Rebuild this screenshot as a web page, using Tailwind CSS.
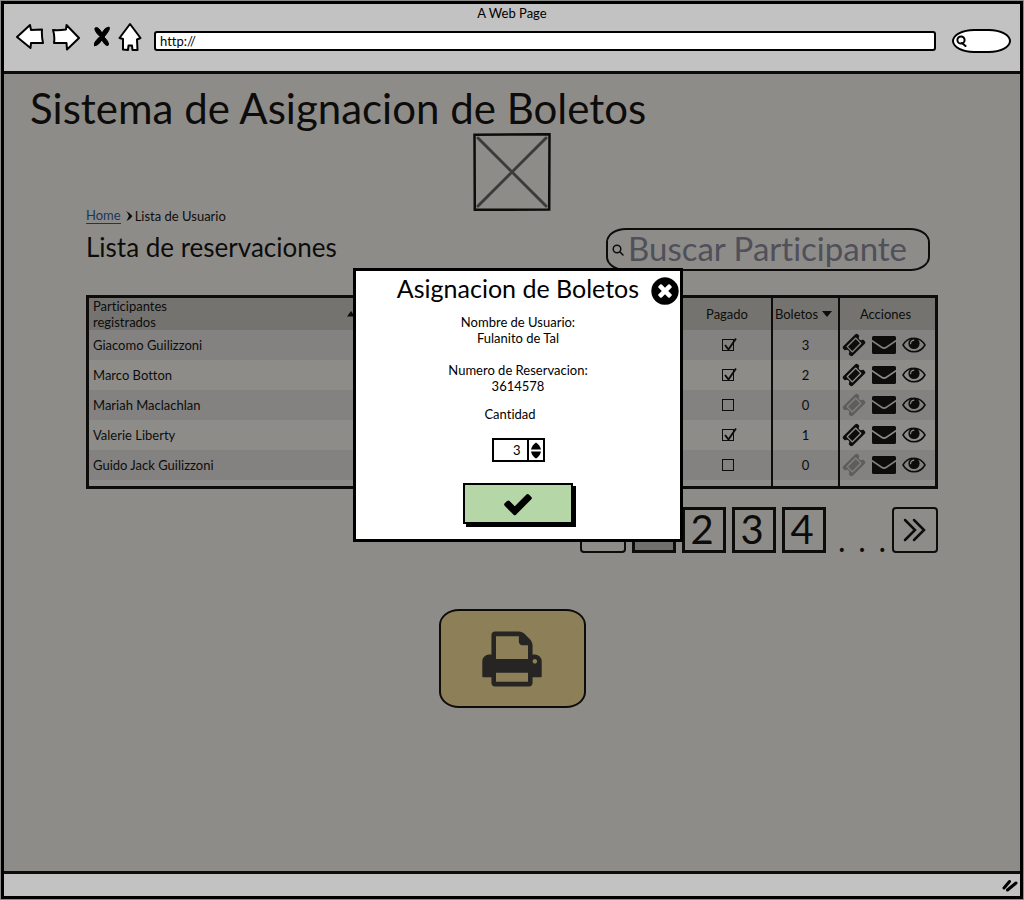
<!DOCTYPE html>
<html lang="es">
<head>
<meta charset="utf-8">
<meta name="viewport" content="width=device-width, initial-scale=1">
<title>A Web Page</title>
<script src="https://cdn.jsdelivr.net/npm/@tailwindcss/browser@4"></script>
</head>
<body class="bg-[#8d8c89] font-['Lato','Open_Sans',sans-serif] text-[13px] leading-4 text-[#0d0c0b] [font-variant-ligatures:none]">
<svg class="hidden" aria-hidden="true">
  <symbol id="ticket" viewBox="0 0 1792 1792"><path d="M1024 452l316 316-572 572-316-316zm-211 979l618-618q19-19 19-45t-19-45l-362-362q-18-18-45-18t-45 18l-618 618q-19 19-19 45t19 45l362 362q18 18 45 18t45-18zm889-637l-907 908q-37 37-90.5 37t-90.5-37l-126-126q56-56 56-136t-56-136-136-56-136 56l-125-126q-37-37-37-90.5t37-90.5l907-906q37-37 90.5-37t90.5 37l125 125q-56 56-56 136t56 136 136 56 136-56l126 125q37 37 37 90.5t-37 90.5z"/></symbol>
  <symbol id="mail" viewBox="0 0 24 18"><path d="M1.5 0H22.500Q24 0 24 1.500V3.800L14 10.600Q12 11.700 10 10.600L0 3.800V1.500Q0 0 1.500 0ZM0 5.800L9.600 12.300Q12 13.600 14.400 12.300L24 5.800V16.500Q24 18 22.500 18H1.500Q0 18 0 16.500Z"/></symbol>
  <symbol id="eye" viewBox="0 0 24 16"><path d="M1 8Q5 1.200 12 1.200T23 8Q19 14.800 12 14.800T1 8Z" fill="none" stroke="currentColor" stroke-width="1.500"/><circle cx="12" cy="6.500" r="5.600"/><path d="M8.600 6.600Q8.800 3.500 11.800 3.200" fill="none" stroke="#8d8c89" stroke-width="1.200" stroke-linecap="round"/></symbol>
  <symbol id="tick" viewBox="0 0 16 16"><path d="M3 8L6.500 12.500L14 1.500" fill="none" stroke="currentColor" stroke-width="1.900"/></symbol>
</svg>

<div class="flex min-h-screen flex-col p-px">
<div class="flex flex-1 flex-col border-[3px] border-black">

  <header class="border-b-[3px] border-[#0d0c0b] bg-[#c2c2c2] pt-px pb-[18px] text-black">
    <p class="text-center">A Web Page</p>
    <nav aria-label="Navegador" class="flex items-center pr-[9px] pl-3">
      <button type="button" aria-label="Atrás" class="mr-2"><svg class="h-8 w-7" viewBox="0 0 28 32" fill="#fff" stroke="#000" stroke-width="2" stroke-linejoin="round"><path d="M1 16L14 4L15 9L26 8.500Q25.500 15 27 22L15 22L14.500 27Z"/></svg></button>
      <button type="button" aria-label="Adelante" class="mr-3.5"><svg class="h-8 w-7" viewBox="0 0 28 32" fill="#fff" stroke="#000" stroke-width="2" stroke-linejoin="round"><path d="M1 9Q7 9.500 14 8.500L14.500 4L27 17L15 28.500L14.500 22L2 22Q3 15 1 9Z"/></svg></button>
      <button type="button" aria-label="Detener" class="mr-2"><svg class="h-8 w-4" viewBox="0 0 16 32" fill="#000"><path d="M1 7Q4 5 8 12Q11 6 15 6Q17 8 10 16Q16 22 14 24.500Q11 25 8 19Q4 25 0 25Q-1 22 6 15.500Q0 10 1 7Z" stroke="#000"/></svg></button>
      <button type="button" aria-label="Inicio" class="mr-3"><svg class="h-8 w-6" viewBox="0 0 24 32" fill="#fff" stroke="#000" stroke-width="2" stroke-linejoin="round"><path d="M12 3L22.500 17L19 18.500L19.500 29L14.500 29L14 24.500L10.500 24.500L10 29L5 28.500L5 18L1.500 17Z"/></svg></button>
      <input type="text" aria-label="Dirección" value="http://" class="mt-2 mr-4 h-5 min-w-0 flex-1 rounded-[3px] border-2 border-black bg-white px-1 outline-none">
      <label class="mt-2 flex h-6 w-[59px] items-center rounded-[22px/12px] border-2 border-black bg-white pl-px">
        <svg class="h-3 w-3 shrink-0" viewBox="0 0 12 12" fill="none" stroke="#000" stroke-width="2" stroke-linecap="round"><circle cx="6" cy="5" r="3.600"/><path d="M7 8L10.500 11"/></svg>
        <input type="text" aria-label="Buscar en la web" class="w-0 min-w-0 flex-1 outline-none">
      </label>
    </nav>
  </header>

  <main class="relative flex-1 pt-2.5">
    <h1 class="px-[26px] text-[42px] leading-[48px]">Sistema de Asignacion de Boletos</h1>
    <svg role="img" aria-label="Imagen" class="mx-auto mt-px h-[78px] w-[78px]" viewBox="0 0 78 78" fill="none"><path d="M5 5L73 73M73 5L5 73" stroke="#3b3b39" stroke-width="3" stroke-linecap="round"/><path d="M1.500 1.800L76.500 1.200L76.200 76.500L1.800 76.800Z" stroke="#0d0c0b" stroke-width="2.500"/></svg>

    <div class="-mt-1 px-[82px]">
      <nav aria-label="Ruta" class="flex items-center gap-1 pt-px">
        <a href="#" class="border-b border-[#1b3658] leading-[15px] text-[#1b3658]">Home</a>
        <svg class="-mr-0.5 h-3 w-2" viewBox="0 0 8 12"><path d="M1 1Q5 3 7.500 6Q5 10 1.500 11Q3 8 4 6Q3 3 1 1Z" fill="#0d0c0b"/></svg>
        <span>Lista de Usuario</span>
      </nav>

      <div class="mt-1 flex items-start justify-between pr-2">
        <h2 class="text-[26px] leading-[38px]">Lista de reservaciones</h2>
        <label class="flex h-[43px] w-[324px] items-center rounded-[20px/14px] border-2 border-[#0d0c0b] pl-1">
          <svg class="mr-1 h-3 w-3 shrink-0" viewBox="0 0 12 12" fill="none" stroke="#0d0c0b" stroke-width="1.500" stroke-linecap="round"><circle cx="5" cy="5" r="3.800"/><path d="M8 8L11 11"/></svg>
          <input type="text" aria-label="Buscar Participante" placeholder="Buscar Participante" class="h-10 min-w-0 flex-1 pb-1 text-[33px] leading-9 outline-none placeholder:text-[#50505a]">
        </label>
      </div>

      <table class="mt-6 w-full table-fixed border-separate border-spacing-0 border-[3px] border-[#0d0c0b]">
        <colgroup><col class="w-[270px]"><col><col class="w-[90px]"><col class="w-[67px]"><col class="w-[97px]"></colgroup>
        <thead class="bg-[#747370]">
          <tr class="h-[31px]">
            <th scope="col" aria-sort="ascending" class="py-0 pl-1 text-left font-normal"><span class="flex items-center justify-between pr-1"><span class="w-28">Participantes registrados</span><svg class="h-1.5 w-2" viewBox="0 0 8 6"><path d="M0 5.500L4 0L8 5.500Z" fill="#0d0c0b"/></svg></span></th>
            <td></td>
            <th scope="col" class="py-0 pr-0 pl-0.5 font-normal">Pagado</th>
            <th scope="col" class="border-l-2 border-[#0d0c0b] py-0 pr-1 pl-0 font-normal"><span class="flex items-center justify-center gap-1">Boletos<svg class="h-1.5 w-2.5" viewBox="0 0 10 6"><path d="M0 0H10L5 6Z" fill="#0d0c0b"/></svg></span></th>
            <th scope="col" class="border-l-2 border-[#0d0c0b] py-0 pr-1 pl-0 font-normal">Acciones</th>
          </tr>
        </thead>
        <tbody id="rows"></tbody>
      </table>

      <nav aria-label="Paginación" class="mt-[18px] flex items-center justify-end text-[40px] leading-10">
        <button type="button" aria-label="Anterior" class="mr-1.5 flex h-[46px] w-[46px] items-center justify-center rounded border-2 border-[#0d0c0b] pb-1"><svg class="h-6 w-6" viewBox="0 0 24 24" fill="none" stroke="#0d0c0b" stroke-width="2.500" stroke-linecap="round"><path d="M12 2L2 12L12 22M21 2L11 12L21 22"/></svg></button>
        <button type="button" aria-current="page" class="mr-1.5 flex h-[46px] w-[44px] items-center justify-center border-[3px] border-[#0d0c0b] bg-[#706f6c] pb-2">1</button>
        <button type="button" class="mr-1.5 flex h-[46px] w-[44px] items-center justify-center border-[3px] border-[#0d0c0b] pr-1 pb-0.5">2</button>
        <button type="button" class="mr-1.5 flex h-[46px] w-[44px] items-center justify-center border-[3px] border-[#0d0c0b] pr-1 pb-0.5">3</button>
        <button type="button" class="mr-3 flex h-[46px] w-[44px] items-center justify-center border-[3px] border-[#0d0c0b] pr-1 pb-0.5">4</button>
        <span class="mr-1.5 flex w-12 justify-between pt-5 text-[32px] leading-6">
          <span>.</span><span>.</span><span>.</span>
        </span>
        <button type="button" aria-label="Siguiente" class="flex h-[46px] w-[46px] items-center justify-center rounded border-2 border-[#0d0c0b]"><svg class="h-6 w-6" viewBox="0 0 24 24" fill="none" stroke="#0d0c0b" stroke-width="2.500" stroke-linecap="round"><path d="M2 2L12 12L2 22M11 2L21 12L11 22"/></svg></button>
      </nav>

      <button type="button" aria-label="Imprimir" class="mx-auto mt-14 flex h-[99px] w-[147px] items-center justify-center rounded-[20px/16px] border-2 border-[#0d0c0b] bg-[#8d7f57]">
        <svg class="h-16 w-16" viewBox="0 0 1792 1792" fill="#262523"><path d="M448 1536h896v-256h-896v256zm0-640h896v-384h-160q-40 0-68-28t-28-68v-160h-640v640zm1152 64q0-26-19-45t-45-19-45 19-19 45 19 45 45 19 45-19 19-45zm128 0v416q0 13-9.500 22.500t-22.500 9.500h-224v160q0 40-28 68t-68 28h-960q-40 0-68-28t-28-68v-160h-224q-13 0-22.500-9.500t-9.500-22.500v-416q0-79 56.500-135.500t135.500-56.500h64v-544q0-40 28-68t68-28h672q40 0 88 20t76 48l152 152q28 28 48 76t20 88v256h64q79 0 135.500 56.500t56.500 135.500z"/></svg>
      </button>
    </div>

    <div class="absolute inset-0 flex items-start justify-center pt-[194px] pl-3">
      <section role="dialog" aria-modal="true" aria-labelledby="dialog-title" class="relative w-[330px] border-[3px] border-black bg-white pt-[3px] pb-[15px] text-center text-black">
        <h3 id="dialog-title" class="text-[25px] leading-7">Asignacion de Boletos</h3>
        <button type="button" aria-label="Cerrar" class="absolute top-1 -right-px"><svg class="h-8 w-8" viewBox="0 0 1792 1792"><path d="M1277 1122q0-26-19-45l-181-181 181-181q19-19 19-45 0-27-19-46l-90-90q-19-19-46-19-26 0-45 19l-181 181-181-181q-19-19-45-19-27 0-46 19l-90 90q-19 19-19 46 0 26 19 45l181 181-181 181q-19 19-19 45 0 27 19 46l90 90q19 19 46 19 26 0 45-19l181-181 181 181q19 19 45 19 27 0 46-19l90-90q19-19 19-46zm387-226q0 209-103 385.500t-279.500 279.500-385.500 103-385.500-103-279.500-279.500-103-385.500 103-385.500 279.500-279.500 385.500-103 385.500 103 279.500 279.500 103 385.500z"/></svg></button>
        <p class="mt-3">Nombre de Usuario:<br>Fulanito de Tal</p>
        <p class="mt-4">Numero de Reservacion:<br>3614578</p>
        <label for="cantidad" class="mt-3 mr-4 block">Cantidad</label>
        <div class="mx-auto mt-4 flex h-6 w-[53px] border-2 border-black">
          <input id="cantidad" type="text" inputmode="numeric" value="3" class="w-0 min-w-0 flex-1 pr-1.5 text-right outline-none">
          <div class="flex w-4 flex-col items-center justify-center gap-px border-l-2 border-black">
            <button type="button" aria-label="Aumentar"><svg class="h-2 w-2.5" viewBox="0 0 10 8"><path d="M0 7.500Q1 3 5 .5Q9 3 10 7.500Z"/></svg></button>
            <button type="button" aria-label="Disminuir"><svg class="h-2 w-2.5" viewBox="0 0 10 8"><path d="M0 .5H10Q9 5 5 7.500Q1 5 0 .5Z"/></svg></button>
          </div>
        </div>
        <button type="submit" aria-label="Confirmar" class="mx-auto mt-[21px] flex h-[41px] w-[110px] items-center justify-center border-2 border-black bg-[#b5d7a8] shadow-[3px_3px_0_0_#000]"><svg class="h-8 w-8" viewBox="0 0 1792 1792"><path d="M1671 566q0 40-28 68l-724 724-136 136q-28 28-68 28t-68-28l-136-136-362-362q-28-28-28-68t28-68l136-136q28-28 68-28t68 28l294 295 656-657q28-28 68-28t68 28l136 136q28 28 28 68z"/></svg></button>
      </section>
    </div>
  </main>

  <footer class="flex h-[25px] items-center justify-end border-t-[3px] border-[#0d0c0b] bg-[#c2c2c2] pr-0.5">
    <svg class="h-4 w-4" viewBox="0 0 16 16" fill="none" stroke="#000" stroke-width="3" stroke-linecap="round"><path d="M2 11L7.500 4.500M5.500 13L14 6"/></svg>
  </footer>
</div>
</div>

<script>
const people = [
  ["Giacomo Guilizzoni", true, 3],
  ["Marco Botton", true, 2],
  ["Mariah Maclachlan", false, 0],
  ["Valerie Liberty", true, 1],
  ["Guido Jack Guilizzoni", false, 0],
];
document.getElementById("rows").innerHTML = people.map(([name, paid, tickets], i) => `
  <tr class="h-[30px] ${i % 2 ? "bg-[#8d8c89]" : "bg-[#838280]"}">
    <td class="py-0 pl-1">${name}</td>
    <td></td>
    <td class="py-0 pr-0 pl-1"><label class="relative mx-auto flex h-4 w-4 items-center justify-center">
      <input type="checkbox" aria-label="Pagado: ${name}" ${paid ? "checked" : ""} class="h-3 w-3 appearance-none border border-[#0d0c0b]">
      ${paid ? '<svg class="absolute top-0 left-0.5 h-4 w-4"><use href="#tick"/></svg>' : ""}
    </label></td>
    <td class="border-l-2 border-[#0d0c0b] p-0 text-center">${tickets}</td>
    <td class="border-l-2 border-[#0d0c0b] p-0"><div class="flex items-center gap-1.5 pl-0.5 fill-[#0d0c0b]">
      <button type="button" aria-label="Asignar boletos" ${tickets ? "" : "disabled"} class="${tickets ? "" : "fill-[#5e5d5b]"}"><svg class="h-6 w-6"><use href="#ticket"/></svg></button>
      <button type="button" aria-label="Enviar correo"><svg class="h-[18px] w-6"><use href="#mail"/></svg></button>
      <button type="button" aria-label="Ver"><svg class="h-4 w-6"><use href="#eye"/></svg></button>
    </div></td>
  </tr>`).join("") + `<tr class="h-1.5"><td class="p-0"></td><td class="p-0"></td><td class="p-0"></td><td class="border-l-2 border-[#0d0c0b] p-0"></td><td class="border-l-2 border-[#0d0c0b] p-0"></td></tr>`;
</script>
</body>
</html>
